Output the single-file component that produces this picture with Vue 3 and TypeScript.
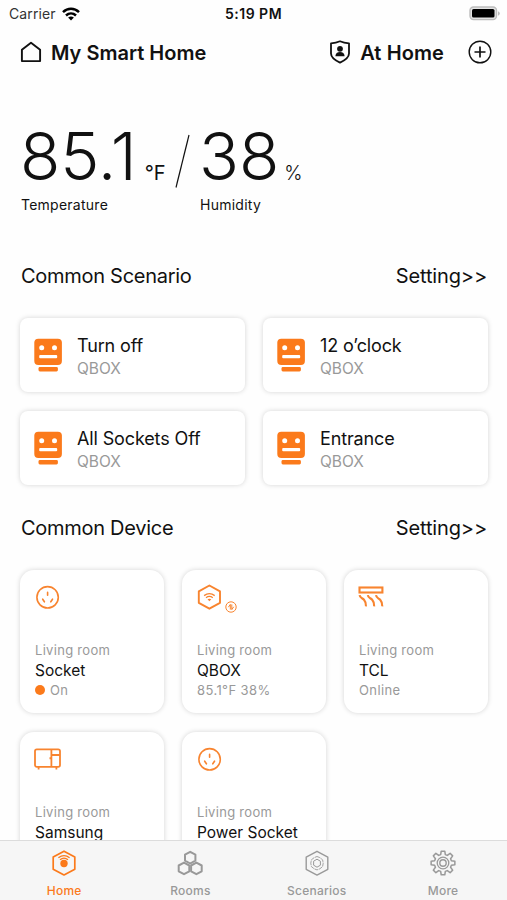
<script setup lang="ts">
interface Scenario {
  name: string
  device: string
}

interface Device {
  icon: 'socket' | 'hub' | 'ac' | 'oven'
  room: string
  name: string
  status: string
  active?: boolean
}

interface Tab {
  icon: 'home' | 'rooms' | 'scenarios' | 'more'
  label: string
}

const scenarios: Scenario[] = [
  { name: 'Turn off', device: 'QBOX' },
  { name: '12 o’clock', device: 'QBOX' },
  { name: 'All Sockets Off', device: 'QBOX' },
  { name: 'Entrance', device: 'QBOX' },
]

const devices: Device[] = [
  { icon: 'socket', room: 'Living room', name: 'Socket', status: 'On', active: true },
  { icon: 'hub', room: 'Living room', name: 'QBOX', status: '85.1°F 38%' },
  { icon: 'ac', room: 'Living room', name: 'TCL', status: 'Online' },
  { icon: 'oven', room: 'Living room', name: 'Samsung', status: '' },
  { icon: 'socket', room: 'Living room', name: 'Power Socket', status: '' },
]

const tabs: Tab[] = [
  { icon: 'home', label: 'Home' },
  { icon: 'rooms', label: 'Rooms' },
  { icon: 'scenarios', label: 'Scenarios' },
  { icon: 'more', label: 'More' },
]

// Outline of the eight-toothed gear, centred on 14,14.
function gearPath(): string {
  const teeth = 8
  const points: string[] = []
  for (let i = 0; i < teeth; i++) {
    const mid = (i / teeth) * Math.PI * 2 - Math.PI / 2
    const corners: [number, number][] = [
      [-0.27, 8.7],
      [-0.15, 12],
      [0.15, 12],
      [0.27, 8.7],
    ]
    for (const [offset, radius] of corners) {
      const x = 14 + Math.cos(mid + offset) * radius
      const y = 14 + Math.sin(mid + offset) * radius
      points.push(`${x.toFixed(2)} ${y.toFixed(2)}`)
    }
  }
  return `M${points.join('L')}Z`
}

const gear = gearPath()
</script>

<template>
  <div class="screen">
    <div class="status">
      <div class="status-left">
        <span>Carrier</span>
        <svg class="wifi" viewBox="0 0 18 14" width="18" height="14">
          <g fill="none" stroke="#000" stroke-width="2.5">
            <path d="M1 5.2C5.6 .7 12.4 .7 17 5.2" />
            <path d="M4 8.5C6.9 5.8 11.1 5.8 14 8.5" />
          </g>
          <path d="M9 13.6 6.1 10.6Q9 8.2 11.9 10.6Z" />
        </svg>
      </div>
      <span class="clock">5:19 PM</span>
      <svg class="battery" viewBox="0 0 32 15" width="32" height="15">
        <rect x="1" y="1" width="26.5" height="12.600" rx="3.5" fill="#e4e4e4" stroke="#bdbdbd" stroke-width="1.4" />
        <rect x="3" y="3" width="22.5" height="8.600" rx="1.6" />
        <path d="M29 5.2Q30.8 6 30.8 7.5T29 9.8Z" fill="#bdbdbd" />
      </svg>
    </div>

    <header class="header">
      <svg class="house" viewBox="0 0 22 22" width="22" height="22">
        <path d="M1.9 8.8 11 1.7 20.1 8.8V20.1H1.9Z" fill="none" stroke="#111" stroke-width="1.9" stroke-linejoin="round" />
      </svg>
      <h1>My Smart Home</h1>
      <div class="mode">
        <svg viewBox="0 0 22 24" width="22" height="24">
          <path d="M11 1.3C14 2.7 17 3.2 20 3.3V13.5C20 18 15.5 20.5 11 22.6C6.5 20.5 2 18 2 13.5V3.3C5 3.2 8 2.7 11 1.3Z" fill="none" stroke="#111" stroke-width="1.8" stroke-linejoin="round" />
          <circle cx="11" cy="8.8" r="2.9" fill="#111" />
          <path d="M6.4 16.2C6.4 13.5 8.3 12 11 12S15.6 13.5 15.6 16.2Z" fill="#111" />
        </svg>
        <span>At Home</span>
      </div>
      <svg class="add" viewBox="0 0 24 24" width="24" height="24">
        <g fill="none" stroke="#111" stroke-width="1.4">
          <circle cx="12" cy="12" r="10.8" />
          <path d="M12 6.5V17.5M6.5 12H17.5" stroke-width="1.7" />
        </g>
      </svg>
    </header>

    <main class="content">
      <section class="climate">
        <div class="reading temperature">
          <p class="value">85.1<span class="unit">°F</span></p>
          <p class="caption">Temperature</p>
        </div>
        <svg class="divider" viewBox="0 0 16 56" width="16" height="56">
          <path d="M14 2 1 54.5" fill="none" stroke="#111" stroke-width="1.2" />
        </svg>
        <div class="reading humidity">
          <p class="value">38<span class="unit percent">%</span></p>
          <p class="caption">Humidity</p>
        </div>
      </section>

      <div class="section-head">
        <h2>Common Scenario</h2>
        <span class="setting">Setting&gt;&gt;</span>
      </div>
      <div class="scenarios">
        <article v-for="item in scenarios" :key="item.name" class="scenario">
          <svg viewBox="0 0 28 34" width="28" height="34">
            <rect x="0.3" y="0.8" width="27.6" height="26.2" rx="4" fill="#fb7a1b" />
            <rect x="4.5" y="29" width="19.4" height="4.4" rx="1.4" fill="#fb7a1b" />
            <circle cx="7.7" cy="9.7" r="2.5" fill="#fff" />
            <circle cx="20.5" cy="9.7" r="2.5" fill="#fff" />
            <rect x="5.2" y="17" width="18" height="3.3" rx="1" fill="#fff" />
          </svg>
          <div class="scenario-text">
            <h3>{{ item.name }}</h3>
            <p>{{ item.device }}</p>
          </div>
        </article>
      </div>

      <div class="section-head">
        <h2>Common Device</h2>
        <span class="setting">Setting&gt;&gt;</span>
      </div>
      <div class="devices">
        <article v-for="item in devices" :key="item.name" class="device">
          <div class="device-icon">
            <svg v-if="item.icon === 'socket'" viewBox="0 0 28 28" width="28" height="28">
              <g fill="none" stroke="#f8842f" stroke-width="1.6" stroke-linecap="round">
                <circle cx="13.6" cy="14.3" r="10.7" />
                <path d="M13.6 9.4V12.3M8.7 16.2 10.4 18.8M18.5 16.2 16.8 18.8" />
              </g>
            </svg>
            <template v-else-if="item.icon === 'hub'">
              <svg viewBox="0 0 28 28" width="28" height="28">
                <path d="M13.4 2.5 24 8.4V19.8L13.4 25.7 2.8 19.8V8.4Z" fill="none" stroke="#f8842f" stroke-width="1.9" stroke-linejoin="round" />
                <g fill="none" stroke="#f8842f" stroke-width="1.3">
                  <path d="M8.1 12.6Q13.4 8.8 18.7 12.6" />
                  <path d="M10 14.7Q13.4 12.2 16.8 14.7" />
                </g>
                <path d="M13.4 18.3 11.5 16.3Q13.4 15 15.3 16.3Z" fill="#f8842f" />
              </svg>
              <svg class="link" viewBox="0 0 12 12" width="12" height="12">
                <g fill="none" stroke="#f8842f" stroke-width="1">
                  <circle cx="6" cy="6" r="5.2" />
                  <path d="M5.3 8.6V3.4L3.4 6.2M6.8 3.4V8.6L8.7 5.8" />
                </g>
              </svg>
            </template>
            <svg v-else-if="item.icon === 'ac'" viewBox="0 0 28 28" width="28" height="28">
              <g fill="none" stroke="#f8842f" stroke-width="2.1">
                <rect x="1.5" y="4.5" width="22.9" height="5" />
                <path d="M1.6 12.2C2 15.4 4.3 14.8 6 16.8C7.4 18.4 8.1 20.4 8 23.4M9.8 12.2C10.2 15.400 12.500 14.800 14.200 16.800C15.600 18.400 16.300 20.400 16.200 23.400M18 12.200C18.400 15.400 20.500 14.800 22.200 16.800C23.600 18.400 24.400 20.400 24.300 23.400" />
              </g>
            </svg>
            <svg v-else viewBox="0 0 28 28" width="28" height="28">
              <g fill="none" stroke="#f8842f" stroke-width="1.8">
                <rect x="1" y="4.3" width="25" height="17.6" rx="1.8" />
                <path d="M17.4 4.3V21.9M17.4 10H26M4.6 21.900V24.500M22.400 21.900V24.500M16.400 12.300V14.300" />
              </g>
            </svg>
          </div>
          <p class="room">{{ item.room }}</p>
          <h3>{{ item.name }}</h3>
          <p v-if="item.status" class="state"><i v-if="item.active" class="dot"></i>{{ item.status }}</p>
        </article>
      </div>
    </main>

    <nav class="tabs">
      <a v-for="(tab, index) in tabs" :key="tab.label" class="tab" :class="{ current: index === 0 }">
        <svg viewBox="0 0 28 28" width="28" height="28" fill="none" stroke="currentColor" stroke-linejoin="round">
          <template v-if="tab.icon === 'home'">
            <path d="M14 2.2 24.8 8V20.2L14 26 3.2 20.2V8Z" stroke-width="1.7" />
            <circle cx="14" cy="14.5" r="3.7" fill="currentColor" stroke="none" />
            <path d="M8.4 8.800Q14 4.400 19.600 8.800M10 10.800Q14 7.400 18 10.800" stroke-width="1.3" />
          </template>
          <template v-else-if="tab.icon === 'rooms'">
            <g stroke-width="2">
              <path d="M14.2 2.8 19.4 5.7V11.6L14.2 14.5 9 11.6V5.7Z" />
              <path d="M8 13.6 13.3 16.5V22.3L8 25.2 2.7 22.3V16.5Z" />
              <path d="M20.4 13.6 25.7 16.5V22.3L20.4 25.2 15.1 22.3V16.5Z" />
            </g>
          </template>
          <template v-else-if="tab.icon === 'scenarios'">
            <path d="M14 2.3 24.8 8.1V20.3L14 26.1 3.2 20.3V8.1Z" stroke-width="1.4" />
            <path d="M14 7.5 16.8 8.6 19.6 10.8 20.2 14.2 19.6 17.6 16.8 19.8 14 20.9 11.2 19.8 8.4 17.6 7.8 14.2 8.4 10.8 11.2 8.6Z" stroke-width="0.9" stroke-dasharray="4 0.7" />
            <path d="M14 10.2 17.4 12.2V16.2L14 18.2 10.6 16.2V12.2Z" stroke-width="1" />
          </template>
          <template v-else>
            <path :d="gear" stroke-width="1.5" />
            <circle cx="14" cy="14" r="5.8" stroke-width="1.3" />
            <circle cx="14" cy="14" r="3.2" stroke-width="1.4" />
          </template>
        </svg>
        <span>{{ tab.label }}</span>
      </a>
    </nav>
  </div>
</template>

<style>
body {
  margin: 0;
  background: #fefefe;
}
</style>

<style scoped>
.screen {
  display: flex;
  flex-direction: column;
  width: 507px;
  height: 900px;
  overflow: hidden;
  background: #fefefe;
  color: #111;
  font-family: Inter, "Liberation Sans", sans-serif;
}

h1,
h2,
h3,
p {
  margin: 0;
  font-weight: 400;
}

svg {
  display: block;
  flex: none;
}

.status {
  display: grid;
  grid-template-columns: 1fr auto 1fr;
  align-items: center;
  height: 27px;
  padding: 0 6px 0 9px;
  font-size: 14px;
}

.status-left {
  display: flex;
  align-items: center;
  gap: 6px;
  color: #333;
  letter-spacing: 0.1px;
}

.clock {
  margin-right: 3px;
  font-weight: 600;
  letter-spacing: 0.5px;
}

.battery {
  justify-self: end;
}

.header {
  display: flex;
  align-items: center;
  height: 50px;
  padding: 0 15px 0 20px;
  font-size: 20px;
  font-weight: 600;
}

.header h1 {
  margin-left: 9px;
  padding-top: 2px;
  font-size: 20px;
  font-weight: 600;
}

.mode {
  display: flex;
  align-items: center;
  gap: 9px;
  margin-left: auto;
}

.mode span {
  padding-top: 2px;
  letter-spacing: 0.1px;
}

.add {
  margin-left: 24px;
}

.content {
  flex: 1;
  min-height: 0;
  overflow: hidden;
  padding: 46px 19px 0 20px;
}

.climate {
  display: flex;
  height: 141px;
}

.temperature {
  width: 155px;
}

.value {
  height: 66px;
  font-size: 66px;
  line-height: 66px;
  font-weight: 300;
  white-space: nowrap;
}

.unit {
  margin-left: 8px;
  font-size: 20px;
  font-weight: 400;
  line-height: 0;
}

.percent {
  margin-left: 5px;
  font-size: 19.5px;
  font-weight: 300;
}

.caption {
  margin: 7px 0 0 1px;
  font-size: 14px;
  line-height: 18px;
  letter-spacing: 0.25px;
}

.divider {
  margin-top: 10px;
}

.humidity {
  margin-left: 8px;
}

.section-head {
  display: flex;
  justify-content: space-between;
  padding: 0 1px;
  font-size: 20px;
  line-height: 24px;
}

.section-head h2 {
  font-size: 20px;
  letter-spacing: -0.28px;
}

.setting {
  letter-spacing: -0.15px;
}

.scenarios {
  display: grid;
  grid-template-columns: 1fr 1fr;
  grid-auto-rows: 74px;
  gap: 19px 18px;
  margin: 30px 0 31px;
}

.scenario,
.device {
  background: #fff;
  box-shadow: 0 0 5px rgba(0, 0, 0, 0.17);
}

.scenario {
  display: flex;
  align-items: center;
  gap: 15px;
  padding-left: 14px;
  border-radius: 8px;
}

.scenario-text {
  padding-top: 3px;
}

.scenario h3 {
  font-size: 18px;
  line-height: 24px;
  letter-spacing: -0.13px;
}

.scenario p {
  font-size: 15.5px;
  line-height: 22px;
  color: #999;
}

.devices {
  display: grid;
  grid-template-columns: repeat(3, 1fr);
  grid-auto-rows: 143px;
  gap: 19px 18px;
  margin-top: 30px;
}

.device {
  box-sizing: border-box;
  padding: 13px 0 0 15px;
  border-radius: 14px;
}

.device-icon {
  display: flex;
  height: 28px;
  margin-left: -1px;
}

.link {
  margin: 18px 0 0 1px;
}

.room,
.state {
  font-size: 13px;
  line-height: 20px;
  color: #999;
}

.room {
  margin-top: 29px;
  letter-spacing: 0.3px;
}

.device h3 {
  padding-top: 1px;
  font-size: 15.5px;
  line-height: 20px;
}

.state {
  display: flex;
  align-items: center;
  gap: 5px;
  margin-top: -1px;
  letter-spacing: 0.4px;
}

.dot {
  width: 10px;
  height: 10px;
  border-radius: 50%;
  background: #fb7a1b;
}

.tabs {
  display: grid;
  grid-template-columns: repeat(4, 126.3px);
  box-sizing: border-box;
  height: 60px;
  padding-left: 1px;
  border-top: 1px solid #dcdcdc;
  background: #f6f6f6;
}

.tab {
  display: flex;
  flex-direction: column;
  align-items: center;
  padding-top: 8px;
  color: #999;
  font-size: 12px;
  line-height: 16px;
  font-weight: 500;
  letter-spacing: 0.25px;
}

.tab span {
  margin-top: 6px;
}

.tab.current {
  color: #fb7a1b;
}
</style>
